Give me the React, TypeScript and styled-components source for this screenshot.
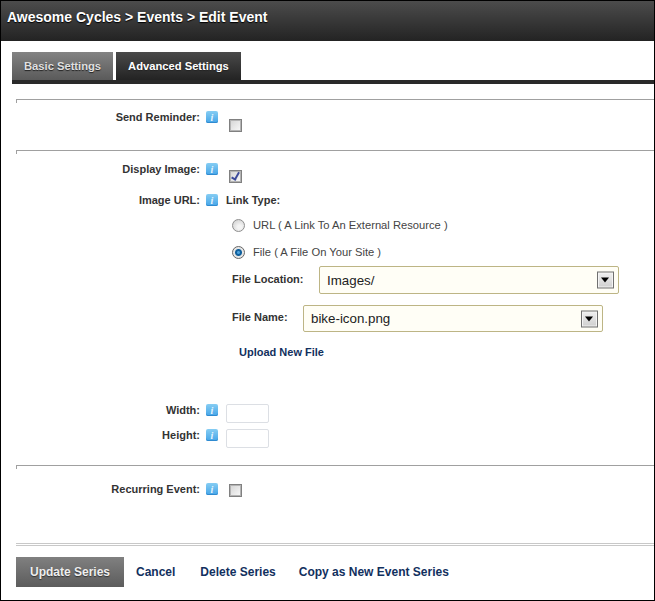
import React from "react";
import styled, { createGlobalStyle } from "styled-components";

const GlobalStyle = createGlobalStyle`
  html, body {
    margin: 0;
    padding: 0;
    background: #fff;
  }
  body {
    font-family: "Liberation Sans", Arial, sans-serif;
    font-size: 11px;
    color: #333;
  }
`;

const InfoIcon = () => (
  <InfoBadge aria-hidden="true">
    <i>i</i>
  </InfoBadge>
);

const App = () => {
  return (
    <Frame>
      <GlobalStyle />
      <Header>Awesome Cycles &gt; Events &gt; Edit Event</Header>

      <Tabs>
        <Tab>Basic Settings</Tab>
        <Tab $active>Advanced Settings</Tab>
      </Tabs>
      <TabBar />

      <Content>
        <Divider />
        <Row $top={11} $height={39}>
          <Label>Send Reminder:</Label>
          <InfoIcon />
          <Check $drop={8} type="checkbox" readOnly />
        </Row>

        <Divider />
        <Row $top={12} $height={31}>
          <Label>Display Image:</Label>
          <InfoIcon />
          <Check $drop={7} type="checkbox" defaultChecked />
        </Row>

        <Row $top={0} $height={0}>
          <Label>Image URL:</Label>
          <InfoIcon />
          <LinkColumn>
            <LinkTitle>Link Type:</LinkTitle>
            <RadioRow>
              <Radio type="radio" name="link" />
              URL ( A Link To An External Resource )
            </RadioRow>
            <RadioRow>
              <Radio type="radio" name="link" defaultChecked />
              File ( A File On Your Site )
            </RadioRow>
            <SelectRow $top={7}>
              <SelectLabel $width={87}>File Location:</SelectLabel>
              <SelectBox $height={28}>
                Images/
                <Arrow />
              </SelectBox>
            </SelectRow>
            <SelectRow $top={11}>
              <SelectLabel $width={71}>File Name:</SelectLabel>
              <SelectBox $height={27}>
                bike-icon.png
                <Arrow />
              </SelectBox>
            </SelectRow>
            <UploadLink href="#">Upload New File</UploadLink>
          </LinkColumn>
        </Row>

        <SizeRow $top={45}>
          <Label>Width:</Label>
          <InfoIcon />
          <SizeInput />
        </SizeRow>
        <SizeRow $top={6}>
          <Label>Height:</Label>
          <InfoIcon />
          <SizeInput />
        </SizeRow>

        <Divider $top={17} />
        <Row $top={17} $height={52}>
          <Label>Recurring Event:</Label>
          <InfoIcon />
          <Check $drop={1} type="checkbox" />
        </Row>
      </Content>

      <Footer>
        <UpdateButton>Update Series</UpdateButton>
        <FooterLink href="#" $gap={12}>Cancel</FooterLink>
        <FooterLink href="#" $gap={25}>Delete Series</FooterLink>
        <FooterLink href="#" $gap={23}>Copy as New Event Series</FooterLink>
      </Footer>
    </Frame>
  );
};

const Frame = styled.div`
  box-sizing: border-box;
  width: 655px;
  height: 601px;
  border: 1px solid #000;
  display: flex;
  flex-direction: column;
  overflow: hidden;
`;

const Header = styled.div`
  height: 40px;
  flex: none;
  box-sizing: border-box;
  padding: 8px 0 0 6px;
  background: linear-gradient(#4c4c4c, #232323);
  color: #fff;
  font-size: 14px;
  font-weight: bold;
  line-height: 16px;
  text-shadow: 0 1px 1px #000;
`;

const Tabs = styled.div`
  display: flex;
  gap: 3px;
  margin: 11px 0 0 11px;
  height: 28px;
  flex: none;
`;

const Tab = styled.div<{ $active?: boolean }>`
  display: flex;
  align-items: center;
  padding: 0 12px;
  font-size: 11.2px;
  font-weight: bold;
  color: ${(p) => (p.$active ? "#fff" : "#e0e0e0")};
  background: ${(p) =>
    p.$active
      ? "linear-gradient(#4a4a4a, #232323)"
      : "linear-gradient(#838383, #5a5a5a)"};
  text-shadow: 0 1px 1px #222;
`;

const TabBar = styled.div`
  height: 4px;
  flex: none;
  margin-left: 11px;
  background: #2a2a2a;
`;

const Content = styled.div`
  flex: 1;
  margin: 15px 0 0 15px;
  color: #333;
`;

const Divider = styled.div<{ $top?: number }>`
  position: relative;
  height: 0;
  margin-top: ${(p) => p.$top ?? 0}px;
  border-top: 1px solid #a0a0a0;

  &::before {
    content: "";
    position: absolute;
    left: 0;
    top: 0;
    width: 1px;
    height: 3px;
    background: #a0a0a0;
  }
`;

const Row = styled.div<{ $top: number; $height: number }>`
  display: flex;
  align-items: flex-start;
  margin-top: ${(p) => p.$top}px;
  min-height: ${(p) => p.$height}px;
`;

const SizeRow = styled.div<{ $top: number }>`
  display: flex;
  align-items: flex-start;
  margin-top: ${(p) => p.$top}px;
`;

const Label = styled.div`
  width: 184px;
  flex: none;
  text-align: right;
  font-weight: bold;
  line-height: 13px;
`;

const InfoBadge = styled.span`
  flex: none;
  width: 12px;
  height: 12px;
  margin-left: 6px;
  border-radius: 2px;
  display: flex;
  align-items: center;
  justify-content: center;
  background: linear-gradient(#86cdf3, #45a5e8);
  box-shadow: inset 0 -1px 0 #2f8ad0;

  i {
    font: italic bold 10px "Liberation Serif", serif;
    color: #e8f6fd;
  }
`;

const Check = styled.input<{ $drop: number }>`
  appearance: none;
  box-sizing: border-box;
  flex: none;
  width: 13px;
  height: 13px;
  margin: ${(p) => p.$drop}px 0 0 11px;
  border: 1px solid #808080;
  box-shadow: inset 0 0 0 1px #b4b4b4;
  background: linear-gradient(135deg, #d4d4d4, #fafafa);
  position: relative;

  &:checked::after {
    content: "";
    position: absolute;
    left: 3px;
    top: 0;
    width: 3px;
    height: 7px;
    border: solid #3c4a9a;
    border-width: 0 2px 2px 0;
    transform: rotate(30deg);
  }
`;

const LinkColumn = styled.div`
  margin-left: 4px;
  flex: 1;
  min-width: 0;
  display: flex;
  flex-direction: column;
`;

const LinkTitle = styled.div`
  margin-left: 4px;
  font-weight: bold;
  line-height: 13px;
`;

const RadioRow = styled.label`
  display: flex;
  align-items: center;
  height: 14px;
  margin-top: 11px;
  font-size: 11.2px;
  color: #444;

  & + & {
    margin-top: 13px;
  }
`;

const Radio = styled.input`
  appearance: none;
  box-sizing: border-box;
  width: 13px;
  height: 13px;
  margin: 0 8px 0 10px;
  border: 1px solid #8e8e8e;
  border-radius: 50%;
  background: radial-gradient(circle at 60% 65%, #f4f4f4 20%, #cfcfcf 90%);

  &:checked {
    background: radial-gradient(circle, #4aa0dc 0 1px, #0f5f9c 2px 3px, #e6e6e6 4px);
    border-color: #666;
  }
`;

const SelectRow = styled.div<{ $top: number }>`
  display: flex;
  align-items: center;
  margin-top: ${(p) => p.$top}px;
  margin-left: 10px;
`;

const SelectLabel = styled.div<{ $width: number }>`
  width: ${(p) => p.$width}px;
  flex: none;
  font-weight: bold;
  line-height: 13px;
  padding-bottom: 2px;
`;

const SelectBox = styled.div<{ $height: number }>`
  box-sizing: border-box;
  position: relative;
  width: 300px;
  height: ${(p) => p.$height}px;
  padding-left: 7px;
  display: flex;
  align-items: center;
  border: 1px solid #bdb585;
  border-radius: 2px;
  background: #fffef6;
  font-size: 13.33px;
  color: #222;
`;

const Arrow = styled.span`
  position: absolute;
  right: 4px;
  top: 50%;
  transform: translateY(-50%);
  box-sizing: border-box;
  width: 17px;
  height: 17px;
  border: 1px solid #707070;
  box-shadow: inset 0 0 0 1px #f4f4f4;
  background: linear-gradient(#f0f0f0, #cfcfcf);

  &::after {
    content: "";
    position: absolute;
    left: 3px;
    top: 5px;
    border: 4.5px solid transparent;
    border-top: 5px solid #000;
    border-bottom: 0;
  }
`;

const UploadLink = styled.a`
  margin: 14px 0 0 17px;
  font-weight: bold;
  line-height: 13px;
  color: #12305e;
  text-decoration: none;
`;

const SizeInput = styled.div`
  box-sizing: border-box;
  width: 43px;
  height: 19px;
  margin-left: 8px;
  border: 1px solid #dcdfe4;
  border-radius: 2px;
  background: #fff;
`;

const Footer = styled.div`
  flex: none;
  height: 57px;
  margin: 0 0 0 15px;
  padding-top: 11px;
  box-sizing: border-box;
  display: flex;
  align-items: flex-start;
  border-top: 3px double #c8c8c8;
`;

const UpdateButton = styled.button`
  width: 108px;
  height: 30px;
  border: 0;
  padding: 0;
  background: linear-gradient(#808080, #5c5c5c);
  color: #eee;
  font: bold 12px "Liberation Sans", Arial, sans-serif;
  text-shadow: 0 1px 1px #333;
`;

const FooterLink = styled.a<{ $gap: number }>`
  margin-left: ${(p) => p.$gap}px;
  font-size: 12px;
  line-height: 30px;
  font-weight: bold;
  color: #12305e;
  text-decoration: none;
`;

export default App;
